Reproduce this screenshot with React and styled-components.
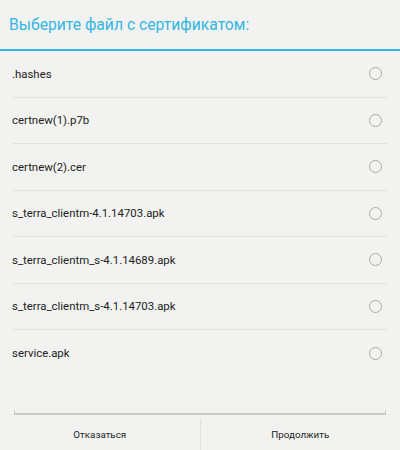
import React from "react";
import styled, { createGlobalStyle } from "styled-components";

const GlobalStyle = createGlobalStyle`
  html, body {
    margin: 0;
    padding: 0;
    background: #f2f3f1;
  }
`;

const files = [
  ".hashes",
  "certnew(1).p7b",
  "certnew(2).cer",
  "s_terra_clientm-4.1.14703.apk",
  "s_terra_clientm_s-4.1.14689.apk",
  "s_terra_clientm_s-4.1.14703.apk",
  "service.apk",
];

const Dialog = styled.div`
  width: 400px;
  height: 450px;
  display: flex;
  flex-direction: column;
  background: #f2f3f1;
  font-family: Roboto, "Liberation Sans", sans-serif;
  overflow: hidden;
`;

const Title = styled.div`
  height: 51px;
  box-sizing: border-box;
  display: flex;
  align-items: center;
  padding: 0 0 1px 9px;
  font-size: 15.7px;
  color: #33b5e5;
  border-bottom: 2px solid #33b5e5;
`;

const List = styled.div`
  display: flex;
  flex-direction: column;
  padding: 0 12px;
`;

const Row = styled.div`
  height: 46.5px;
  box-sizing: border-box;
  display: flex;
  align-items: center;
  justify-content: space-between;
  border-bottom: ${(p) => (p.last ? "none" : "1px solid #e1e2e0")};
  font-size: 11.4px;
  color: #222;
  padding-right: 6px;
`;

const Radio = styled.span`
  width: 11px;
  height: 11px;
  border-radius: 50%;
  border: 1px solid #a9a9a9;
`;

const Spacer = styled.div`
  flex: 1;
`;

const Edge = styled.div`
  margin: 0 14px 1px 14px;
  height: 3px;
  border: 2px solid #c9cac8;
  border-top: none;
  border-left-width: 1px;
  border-right-width: 1px;
`;

const Buttons = styled.div`
  height: 34px;
  display: flex;
`;

const Button = styled.div`
  flex: 1;
  display: flex;
  align-items: center;
  justify-content: center;
  font-size: 9.8px;
  color: #222;
  padding-top: 3px;
  & + & {
    border-left: 1px solid #e0e1df;
    margin-top: 3px;
    padding-top: 0;
  }
`;

const App = () => (
  <Dialog>
    <GlobalStyle />
    <Title>Выберите файл с сертификатом:</Title>
    <List>
      {files.map((f, i) => (
        <Row key={f} last={i === files.length - 1}>
          {f}
          <Radio />
        </Row>
      ))}
    </List>
    <Spacer />
    <Edge />
    <Buttons>
      <Button>Отказаться</Button>
      <Button>Продолжить</Button>
    </Buttons>
  </Dialog>
);

export default App;
